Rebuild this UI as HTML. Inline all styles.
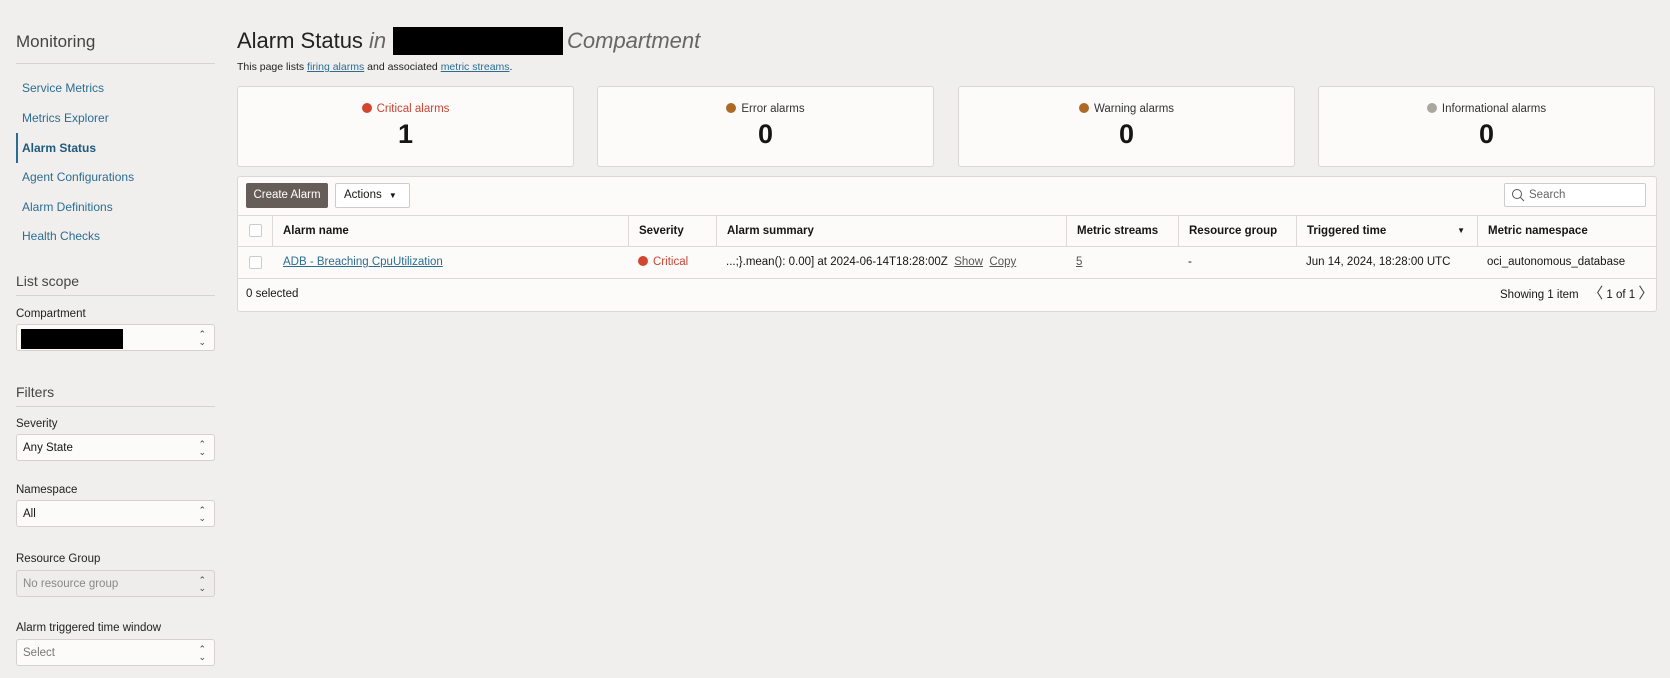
<!DOCTYPE html>
<html><head><meta charset="utf-8"><style>
*{box-sizing:border-box;margin:0;padding:0}
body{width:1670px;height:678px;background:#f1efed;font-family:"Liberation Sans",sans-serif;color:#161513;position:relative;overflow:hidden}
.a{position:absolute}
.lnk{color:#2b6d92;font-size:12px}
.sel{position:absolute;left:16px;width:199px;height:27px;background:#fcfbfa;border:1px solid #d4d1ce;border-radius:3px;font-size:11.5px;padding:0 6px;line-height:27px}
.sel::after{content:"⌃\A⌄";white-space:pre;position:absolute;right:8px;top:5px;font-size:9px;line-height:8px;color:#444}
.lbl{position:absolute;left:16px;font-size:11.5px;color:#222}
.hd{position:absolute;left:16px;font-size:14px;color:#444}
.hr{position:absolute;left:16px;width:199px;height:1px;background:#d6d3d0}
.card{position:absolute;top:86px;height:81px;width:337px;background:#fcfbfa;border:1px solid #dad7d4;border-radius:3px;text-align:center}
.card .t{margin-top:16px;font-size:11.5px;color:#333}
.card .n{font-size:27px;font-weight:bold;margin-top:4px}
.dot{display:inline-block;width:10px;height:10px;border-radius:50%;margin-right:5px;vertical-align:-1px}
.th{position:absolute;top:216px;height:30px;line-height:30px;font-size:11.5px;font-weight:bold;padding-left:10px;border-left:1px solid #dcd9d6}
.td{position:absolute;top:247px;height:31px;line-height:31px;font-size:11.5px;padding-left:10px}
.cb{position:absolute;width:13px;height:13px;border:1px solid #ccc;border-radius:2px;background:#fff;left:249px}
</style></head><body>
<div class="a" style="left:16px;top:32px;font-size:17px;color:#444">Monitoring</div>
<div class="hr" style="top:63px"></div>
<div class="a lnk" style="left:22px;top:81px">Service Metrics</div>
<div class="a lnk" style="left:22px;top:111px">Metrics Explorer</div>
<div class="a" style="left:16px;top:133px;width:2px;height:30px;background:#2b6d92"></div>
<div class="a lnk" style="left:22px;top:141px;font-weight:bold;color:#1f5a7d">Alarm Status</div>
<div class="a lnk" style="left:22px;top:170px">Agent Configurations</div>
<div class="a lnk" style="left:22px;top:200px">Alarm Definitions</div>
<div class="a lnk" style="left:22px;top:229px">Health Checks</div>
<div class="hd" style="top:273px">List scope</div>
<div class="hr" style="top:295px"></div>
<div class="lbl" style="top:308px">Compartment</div>
<div class="sel" style="top:324px"><div style="position:absolute;left:4px;top:4px;width:102px;height:20px;background:#000"></div></div>
<div class="hd" style="top:384px">Filters</div>
<div class="hr" style="top:406px"></div>
<div class="lbl" style="top:418px">Severity</div>
<div class="sel" style="top:434px">Any State</div>
<div class="lbl" style="top:484px">Namespace</div>
<div class="sel" style="top:500px">All</div>
<div class="lbl" style="top:553px">Resource Group</div>
<div class="sel" style="top:570px;background:#efedeb;color:#888">No resource group</div>
<div class="lbl" style="top:622px">Alarm triggered time window</div>
<div class="sel" style="top:639px;color:#777">Select</div>

<div class="a" style="left:237px;top:28px;font-size:22px;color:#222">Alarm Status <i style="color:#666">in</i></div>
<div class="a" style="left:393px;top:27px;width:170px;height:28px;background:#000"></div>
<div class="a" style="left:567px;top:28px;font-size:22px;color:#666;font-style:italic">Compartment</div>
<div class="a" style="left:237px;top:61px;font-size:10.5px;color:#222">This page lists <u class="lnk" style="font-size:10.5px">firing alarms</u> and associated <u class="lnk" style="font-size:10.5px">metric streams</u>.</div>

<div class="card" style="left:237px"><div class="t" style="color:#c74634"><span class="dot" style="background:#d2452f"></span>Critical alarms</div><div class="n">1</div></div>
<div class="card" style="left:597px"><div class="t"><span class="dot" style="background:#ac6a25"></span>Error alarms</div><div class="n">0</div></div>
<div class="card" style="left:958px"><div class="t"><span class="dot" style="background:#ac6a25"></span>Warning alarms</div><div class="n">0</div></div>
<div class="card" style="left:1318px"><div class="t"><span class="dot" style="background:#aaa6a2"></span>Informational alarms</div><div class="n">0</div></div>

<div class="a" style="left:237px;top:176px;width:1420px;height:136px;background:#fcfbfa;border:1px solid #dad7d4;border-radius:3px"></div>
<div class="a" style="left:246px;top:183px;width:82px;height:25px;background:#665d58;color:#fff;font-size:11.5px;line-height:25px;text-align:center;border-radius:2px">Create Alarm</div>
<div class="a" style="left:335px;top:183px;width:75px;height:25px;border:1px solid #ccc;background:#fff;font-size:11.5px;line-height:23px;padding-left:8px;border-radius:2px">Actions <span style="font-size:8px;margin-left:4px">▼</span></div>
<div class="a" style="left:1504px;top:183px;width:142px;height:24px;border:1px solid #ccc;background:#fff;font-size:11.5px;line-height:22px;padding-left:24px;color:#666;border-radius:2px">Search<svg style="position:absolute;left:6px;top:4px" width="14" height="14" viewBox="0 0 14 14"><circle cx="6" cy="6" r="4.5" fill="none" stroke="#555" stroke-width="1"/><path d="M9.3 9.3L13 13" stroke="#555"/></svg></div>
<div class="a" style="left:238px;top:215px;width:1418px;height:1px;background:#dcd9d6"></div>
<div class="a" style="left:238px;top:246px;width:1418px;height:1px;background:#dcd9d6"></div>
<div class="a" style="left:238px;top:278px;width:1418px;height:1px;background:#dcd9d6"></div>
<div class="cb" style="top:224px"></div><div class="cb" style="top:256px"></div>
<div class="th" style="left:272px;width:356px">Alarm name</div>
<div class="th" style="left:628px;width:88px">Severity</div>
<div class="th" style="left:716px;width:350px">Alarm summary</div>
<div class="th" style="left:1066px;width:112px">Metric streams</div>
<div class="th" style="left:1178px;width:118px">Resource group</div>
<div class="th" style="left:1296px;width:181px">Triggered time<span style="position:absolute;right:12px;font-size:8px">▼</span></div>
<div class="th" style="left:1477px;width:180px">Metric namespace</div>
<div class="td lnk" style="left:273px;font-size:11.5px"><u>ADB - Breaching CpuUtilization</u></div>
<div class="td" style="left:628px;color:#c74634"><span class="dot" style="background:#d2452f"></span>Critical</div>
<div class="td" style="left:716px">...;}.mean(): 0.00] at 2024-06-14T18:28:00Z&nbsp; <u style="color:#555">Show</u>&nbsp; <u style="color:#555">Copy</u></div>
<div class="td" style="left:1066px;color:#555"><u>5</u></div>
<div class="td" style="left:1178px">-</div>
<div class="td" style="left:1296px">Jun 14, 2024, 18:28:00 UTC</div>
<div class="td" style="left:1477px">oci_autonomous_database</div>
<div class="a" style="left:246px;top:288px;font-size:11.5px">0 selected</div>
<div class="a" style="left:1500px;top:284px;font-size:11.5px;line-height:20px">Showing 1 item &nbsp;&nbsp;<span style="font-size:15px;color:#444">〈</span> 1 of 1 <span style="font-size:15px;color:#444">〉</span></div>
</body></html>
